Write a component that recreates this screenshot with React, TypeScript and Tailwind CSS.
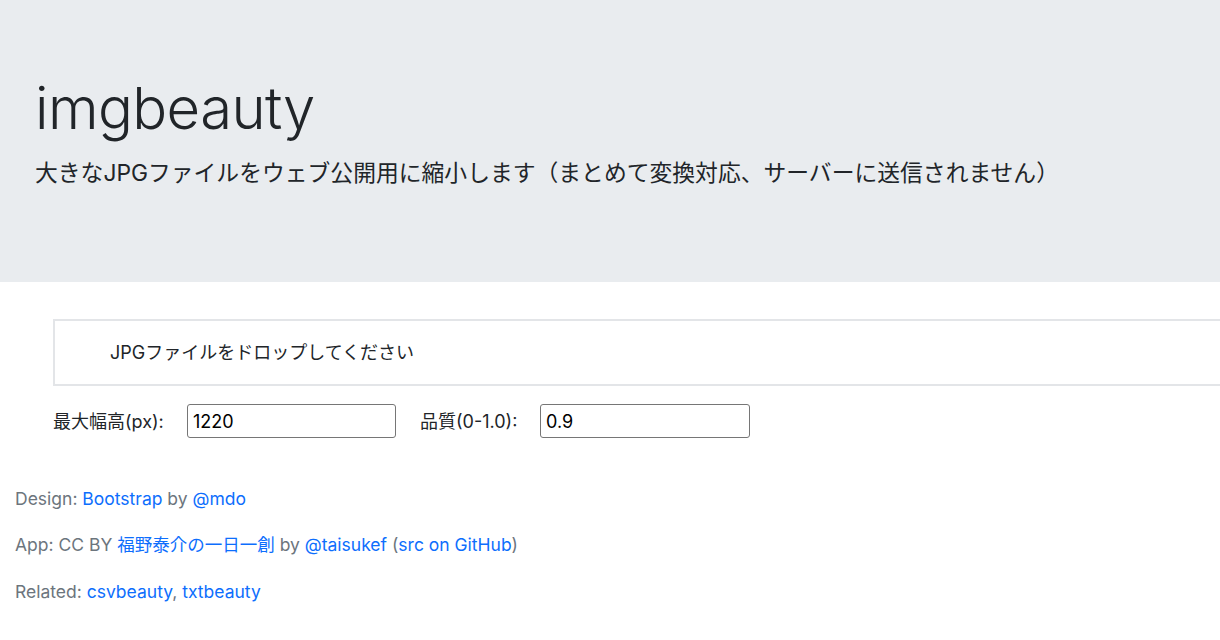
import { useState } from "react";

const Header = () => (
  <div className="bg-[#e9ecef] px-[35px] pt-[74px] h-[282px]">
    <h1 className="text-[58px] leading-[1.2] font-light text-[#212529] tracking-[-0.6px]">imgbeauty</h1>
    <p className="mt-[12px] text-[22.8px] leading-[1.5] text-[#212529]">
      大きなJPGファイルをウェブ公開用に縮小します（まとめて変換対応、サーバーに送信されません）
    </p>
  </div>
);

const Settings = () => {
  const [maxSize, setMaxSize] = useState("1220");
  const [quality, setQuality] = useState("0.9");

  return (
    <div className="flex items-center mt-[18px] text-[18px] text-[#212529]">
      <label className="w-[134px]">最大幅高(px):</label>
      <input
        value={maxSize}
        onChange={(e) => setMaxSize(e.target.value)}
        className="w-[209px] h-[34px] px-[5px] border border-[#767676] rounded-[3px] text-[18px] text-black"
      />
      <label className="ml-[24px] w-[120px]">品質(0-1.0):</label>
      <input
        value={quality}
        onChange={(e) => setQuality(e.target.value)}
        className="w-[210px] h-[34px] px-[5px] border border-[#767676] rounded-[3px] text-[18px] text-black"
      />
    </div>
  );
};

const Footer = () => (
  <div className="px-[15px] mt-[48px] text-[17.5px] leading-[1.5] text-[#6c757d] flex flex-col gap-[20px]">
    <p>
      Design: <a href="#" className="text-[#0d6efd]">Bootstrap</a> by{" "}
      <a href="#" className="text-[#0d6efd]">@mdo</a>
    </p>
    <p>
      App: CC BY <a href="#" className="text-[#0d6efd]">福野泰介の一日一創</a> by{" "}
      <a href="#" className="text-[#0d6efd]">@taisukef</a> (
      <a href="#" className="text-[#0d6efd]">src on GitHub</a>)
    </p>
    <p>
      Related: <a href="#" className="text-[#0d6efd]">csvbeauty</a>,{" "}
      <a href="#" className="text-[#0d6efd]">txtbeauty</a>
    </p>
  </div>
);

export default function App() {
  return (
    <div
      className="w-[1220px] h-[640px] overflow-hidden bg-white"
      style={{ fontFamily: '"Inter", "Noto Sans CJK JP", sans-serif' }}
    >
      <Header />
      <div className="pl-[53px] pt-[37px]">
        {/* drop area runs off the right edge like the original */}
        <div className="w-[1220px] h-[67px] border-2 border-[#e3e5e8] flex items-center pl-[55px] text-[18px] text-[#212529]">
          JPGファイルをドロップしてください
        </div>
        <Settings />
      </div>
      <Footer />
    </div>
  );
}
